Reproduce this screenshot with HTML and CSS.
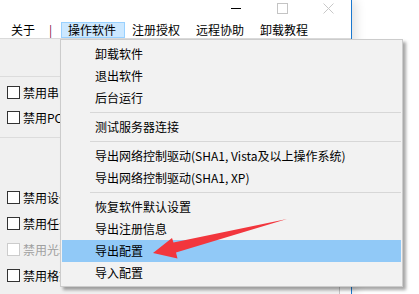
FILE: index.html
```html
<!DOCTYPE html>
<html lang="zh-CN">

<head>
  <meta charset="UTF-8" />
  <title>操作软件</title>
  <meta name="viewport" content="width=device-width, initial-scale=1.0" />
  <link rel="stylesheet" href="styles.css">
</head>

<body>

  <div class="window">
    <div class="titlebar">
      <span class="ctrl">
        <svg width="10" height="10" viewBox="0 0 10 10"><path d="M0 5.5h10" stroke="#000" stroke-width="1" /></svg>
      </span>
      <span class="ctrl">
        <svg width="11" height="11" viewBox="0 0 11 11"><rect x="0.5" y="0.5" width="10" height="10" fill="none" stroke="#c4c4c4" stroke-width="1" /></svg>
      </span>
      <span class="ctrl">
        <svg width="11" height="11" viewBox="0 0 11 11"><path d="M0.5 0.5l10 10M10.5 0.5l-10 10" stroke="#c8c8c8" stroke-width="1" /></svg>
      </span>
    </div>

    <div class="menubar">
      <span class="about">关于</span>
      <span class="pipe">|</span>
      <span class="menu-item active">操作软件</span>
      <span class="menu-item">注册授权</span>
      <span class="menu-item">远程协助</span>
      <span class="menu-item">卸载教程</span>
    </div>

    <div class="content">
      <div class="panel">
        <div class="spacer"></div>
        <div class="rule"></div>
        <div class="checks first">
          <label class="check"><span class="box"></span>禁用串口</label>
          <label class="check"><span class="box"></span>禁用PC卡</label>
        </div>
        <div class="rule"></div>
        <div class="checks second">
          <label class="check"><span class="box"></span>禁用设备</label>
          <label class="check"><span class="box"></span>禁用任务栏</label>
          <label class="check disabled"><span class="box"></span>禁用光驱</label>
          <label class="check"><span class="box"></span>禁用格式化</label>
        </div>
      </div>
      <div class="strip"></div>
    </div>
  </div>

  <div class="popup">
    <div class="item">卸载软件</div>
    <div class="item">退出软件</div>
    <div class="item">后台运行</div>
    <div class="sep"></div>
    <div class="item">测试服务器连接</div>
    <div class="sep"></div>
    <div class="item">导出网络控制驱动(SHA1, Vista及以上操作系统)</div>
    <div class="item">导出网络控制驱动(SHA1, XP)</div>
    <div class="sep"></div>
    <div class="item">恢复软件默认设置</div>
    <div class="item">导出注册信息</div>
    <div class="item hover">导出配置</div>
    <div class="item">导入配置</div>
  </div>

  <svg class="arrow" width="419" height="294" viewBox="0 0 419 294">
    <polygon points="153,253 172,238 173.5,242.5 287,219 176,252.5 177.5,258.5" fill="#f2363d" />
  </svg>

</body>

</html>
```

FILE: styles.css
```css
* {
  margin: 0;
  padding: 0;
  box-sizing: border-box;
}

body {
  width: 419px;
  height: 294px;
  background: #fff;
  font-family: "Noto Sans CJK SC", "Noto Sans", sans-serif;
  font-size: 12px;
  color: #000;
  position: relative;
  overflow: hidden;
}

.window {
  width: 352px;
  height: 294px;
  background: #fff;
  border-right: 1px solid #1a78cf;
  box-shadow: 4px 0 10px rgba(0, 0, 0, 0.12);
  display: flex;
  flex-direction: column;
}

.titlebar {
  height: 20px;
  display: flex;
  justify-content: flex-end;
}

.ctrl {
  width: 46px;
  height: 16px;
  display: flex;
  align-items: center;
  justify-content: center;
}

.ctrl svg {
  display: block;
}

.menubar {
  height: 18px;
  padding: 2px 0 0 11px;
  display: flex;
  align-items: flex-start;
  line-height: 16px;
}

.about {
  margin-right: 14px;
}

.pipe {
  width: 12px;
  color: #7a1049;
}

.menu-item {
  height: 16px;
  padding: 0 8px 0 6px;
  border: 1px solid transparent;
  line-height: 14px;
}

.menu-item.active {
  background: #cce8ff;
  border-color: #99d1ff;
}

.content {
  flex: 1;
  display: flex;
  border-top: 1px solid #dadada;
}

.panel {
  width: 340px;
  background: #f0f0f0;
  border-right: 1px solid #c4c4c4;
}

.strip {
  flex: 1;
  background: #f9f9f9;
}

.spacer {
  height: 37px;
}

.rule {
  height: 1px;
  background: #dcdcdc;
}

.checks.first {
  padding: 3px 0 7px;
}

.checks.second {
  margin-top: 46px;
}

.check {
  height: 25px;
  display: flex;
  align-items: center;
  padding-left: 7px;
  white-space: nowrap;
}

.checks.second .check {
  height: 26px;
}

.box {
  width: 13px;
  height: 13px;
  border: 1px solid #333;
  background: #fff;
  margin-right: 3px;
}

.check.disabled {
  color: #a0a0a0;
}

.check.disabled .box {
  border-color: #cccccc;
}

.popup {
  position: absolute;
  left: 60px;
  top: 39px;
  width: 343px;
  height: 248px;
  background: #f2f2f2;
  border: 1px solid #cccccc;
  box-shadow: 3px 3px 3px rgba(0, 0, 0, 0.35);
  padding: 3px 0 2px;
}

.item {
  height: 22px;
  line-height: 22px;
  padding-left: 33px;
  margin: 0 1px;
  white-space: nowrap;
}

.item.hover {
  background: #91c9f7;
}

.sep {
  height: 7px;
  margin: 0 1px 0 29px;
  display: flex;
  align-items: center;
}

.sep::before {
  content: "";
  flex: 1;
  height: 1px;
  background: #d7d7d7;
}

.arrow {
  position: absolute;
  left: 0;
  top: 0;
  pointer-events: none;
}
```
